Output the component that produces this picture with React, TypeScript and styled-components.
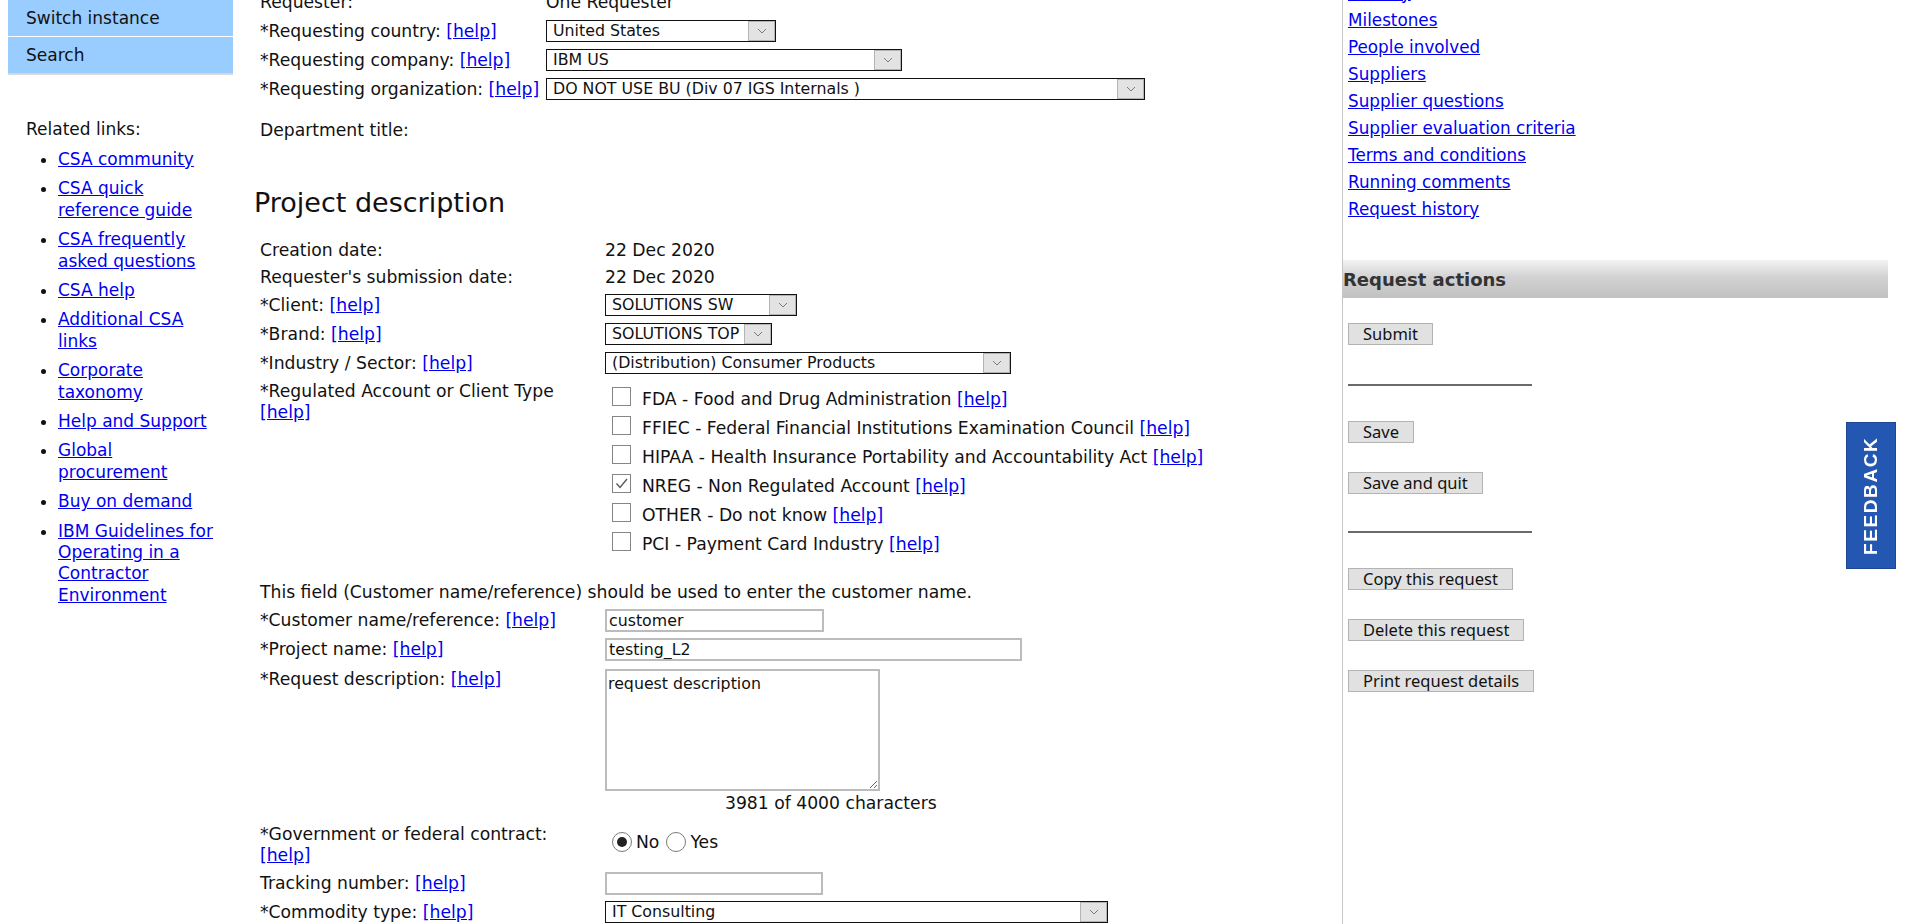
import React from 'react';
import styled, {createGlobalStyle} from 'styled-components';

const GlobalStyle = createGlobalStyle`
  html, body {
    margin: 0;
    padding: 0;
    background: #fff;
  }
  body {
    font-family: "DejaVu Sans", Verdana, sans-serif;
    font-size: 17.2px;
    color: #111;
    overflow: hidden;
  }
`

const Page = styled.div`
  display: flex;
  align-items: flex-start;
  width: 1920px;
  height: 924px;
  overflow: hidden;
`

/* ---------- left navigation ---------- */

const LeftNav = styled.nav`
  width: 225px;
  margin-left: 8px;
  flex-shrink: 0;
  font-size: 17px;
`

const NavButton = styled.a`
  display: flex;
  align-items: center;
  height: 36px;
  padding-left: 18px;
  background: #99ccff;
  color: #111;
  text-decoration: none;

  & + & {
    margin-top: 1px;
  }
`

const NavRule = styled.div`
  height: 2px;
  background: #d8d8d8;
`

const Related = styled.div`
  margin-top: 43.5px;
  padding: 0 9px 0 18px;
  line-height: 21.4px;
`

const LinkList = styled.ul`
  margin: 9px 0 0;
  padding-left: 32px;
  list-style: disc;
`

const LinkItem = styled.li`
  margin-bottom: 8px;
`

const TextLink = styled.a`
  color: #0000ee;
  text-decoration: underline;
`

/* ---------- main form ---------- */

const Main = styled.main`
  width: 1109px;
  flex-shrink: 0;
  box-sizing: border-box;
  padding-left: 22px;
  margin-top: -12.5px;
`

interface RowProps {
    $label: number,
    $h?: number,
    $pt?: number,
    $pb?: number,
    $mt?: number,
}

const FormRow = styled.div<RowProps>`
  display: grid;
  grid-template-columns: ${p => p.$label}px auto;
  align-items: ${p => p.$h ? 'center' : 'start'};
  height: ${p => p.$h ? `${p.$h}px` : 'auto'};
  padding: ${p => p.$pt || 0}px 0 ${p => p.$pb || 0}px;
  margin-top: ${p => p.$mt || 0}px;
  line-height: 21px;
`

const Label = styled.div`
  padding-left: 5px;
  white-space: nowrap;
`

const Value = styled.div`
  display: flex;
  flex-direction: column;
  align-items: flex-start;
`

const NoteRow = styled.div<{ $mt?: number }>`
  height: 27px;
  line-height: 27px;
  padding-left: 5px;
  margin-top: ${p => p.$mt || 0}px;
`

const SectionTitle = styled.h2`
  margin: 42.5px 0 18.5px -1px;
  font-size: 27px;
  font-weight: normal;
  line-height: 31px;
  color: #111;
`

const SelectBox = styled.div<{ $w: number }>`
  display: flex;
  width: ${p => p.$w}px;
  height: 22px;
  box-sizing: border-box;
  border: 1px solid #111;
  background: #fff;
  font-size: 15.8px;
  line-height: 20px;
`

const SelectText = styled.span`
  flex: 1;
  padding-left: 6px;
  white-space: nowrap;
  overflow: hidden;
`

const SelectArrow = styled.span`
  width: 27px;
  box-sizing: border-box;
  border: 1px solid #b4b4b4;
  background: #e3e3e3;
  display: flex;
  align-items: center;
  justify-content: center;
`

const TextInput = styled.input<{ $w: number }>`
  width: ${p => p.$w}px;
  height: 23px;
  box-sizing: border-box;
  margin: 0;
  padding: 0 2px;
  border: 2px solid #bcbcbc;
  font-family: "DejaVu Sans", Verdana, sans-serif;
  font-size: 15.8px;
  color: #111;
  outline: none;
`

const TextArea = styled.textarea`
  width: 275px;
  height: 122px;
  box-sizing: border-box;
  margin: 0;
  padding: 4px 1px;
  border: 2px solid #bcbcbc;
  font-family: "DejaVu Sans", Verdana, sans-serif;
  font-size: 15.8px;
  line-height: 18px;
  color: #111;
  resize: both;
  outline: none;
`

const Counter = styled.div`
  margin: 2px 0 0 120px;
  line-height: 21px;
`

const CheckList = styled.div`
  margin-top: 4px;
`

const CheckItem = styled.label`
  display: flex;
  align-items: center;
  height: 29px;
  white-space: nowrap;
`

const CheckBox = styled.span`
  width: 19px;
  height: 19px;
  box-sizing: border-box;
  flex-shrink: 0;
  margin: 0 11px 6px 7px;
  border: 1px solid #868686;
  background: #fff;
  display: flex;
  align-items: center;
  justify-content: center;
`

const RadioGroup = styled.div`
  display: flex;
  align-items: center;
  height: 21px;
  margin-top: 8px;
`

const Radio = styled.span<{ $on?: boolean, $gap: number }>`
  width: 20px;
  height: 20px;
  box-sizing: border-box;
  margin-left: ${p => p.$gap}px;
  margin-right: 4px;
  border: 1px solid #7a7a7a;
  border-radius: 50%;
  background: #fff;
  display: flex;
  align-items: center;
  justify-content: center;

  &::after {
    content: '';
    width: 10px;
    height: 10px;
    border-radius: 50%;
    background: ${p => p.$on ? '#222' : 'transparent'};
  }
`

/* ---------- right panel ---------- */

const SidePanel = styled.aside`
  flex: 1;
  min-height: 980px;
  margin-top: -20.5px;
  border-left: 1px solid #c6c6c6;
  font-size: 16.8px;
`

const SideLinks = styled.div`
  padding-left: 5px;
`

const SideLinkRow = styled.div`
  padding: 3px 0;
  line-height: 21px;
`

const ActionsBar = styled.div`
  width: 545px;
  height: 38px;
  margin-top: 37.5px;
  display: flex;
  align-items: center;
  background: linear-gradient(to bottom, #f3f3f3 0%, #d2d2d2 45%, #c1c1c1 100%);
  font-size: 18px;
  font-weight: bold;
  color: #333;
`

const ActionsBody = styled.div`
  display: flex;
  flex-direction: column;
  align-items: flex-start;
  padding-left: 5px;
`

const ActionButton = styled.button<{ $mt: number }>`
  margin: ${p => p.$mt}px 0 0;
  height: 22px;
  padding: 0 14px;
  font-family: "Noto Sans", "Open Sans", sans-serif;
  font-size: 16.5px;
  line-height: 20px;
  color: #111;
  background: #e1e1e1;
  border: 1px solid #b3b3b3;
  border-radius: 0;
`

const Divider = styled.div<{ $mt: number }>`
  width: 184px;
  margin-top: ${p => p.$mt}px;
  border-top: 2px solid #6a6a6a;
`

const FeedbackTab = styled.a`
  position: fixed;
  right: 24px;
  top: 422px;
  width: 50px;
  height: 147px;
  box-sizing: border-box;
  border: 1px solid #1d4795;
  background: #2457b1;
  color: #fff;
  display: flex;
  align-items: center;
  justify-content: center;
  writing-mode: vertical-rl;
  transform: rotate(180deg);
  font-family: "Liberation Sans", Arial, sans-serif;
  font-weight: bold;
  font-size: 19px;
  letter-spacing: 1.6px;
  text-decoration: none;
`

/* ---------- small pieces ---------- */

const Help = () => <TextLink href="#">[help]</TextLink>

const Chevron = () => (
    <svg width="10" height="6" viewBox="0 0 10 6">
        <polyline points="1,1 5,5 9,1" fill="none" stroke="#7b7b7b" strokeWidth="1"/>
    </svg>
)

const Select: React.FC<{ w: number, text: string }> = ({w, text}) => (
    <SelectBox $w={w}>
        <SelectText>{text}</SelectText>
        <SelectArrow><Chevron/></SelectArrow>
    </SelectBox>
)

const Check: React.FC<{ checked?: boolean, text: string }> = ({checked, text}) => (
    <CheckItem>
        <CheckBox>
            {checked &&
                <svg width="13" height="11" viewBox="0 0 13 11">
                    <polyline points="1.5,5.5 5,9.5 12,1" fill="none" stroke="#555" strokeWidth="1.3"/>
                </svg>}
        </CheckBox>
        <span>{text} <Help/></span>
    </CheckItem>
)

const relatedLinks = [
    'CSA community',
    'CSA quick reference guide',
    'CSA frequently asked questions',
    'CSA help',
    'Additional CSA links',
    'Corporate taxonomy',
    'Help and Support',
    'Global procurement',
    'Buy on demand',
    'IBM Guidelines for Operating in a Contractor Environment',
]

const sideLinks = [
    'Activity',
    'Milestones',
    'People involved',
    'Suppliers',
    'Supplier questions',
    'Supplier evaluation criteria',
    'Terms and conditions',
    'Running comments',
    'Request history',
]

const regulated = [
    {text: 'FDA - Food and Drug Administration'},
    {text: 'FFIEC - Federal Financial Institutions Examination Council'},
    {text: 'HIPAA - Health Insurance Portability and Accountability Act'},
    {text: 'NREG - Non Regulated Account', checked: true},
    {text: 'OTHER - Do not know'},
    {text: 'PCI - Payment Card Industry'},
]

const L1 = 291
const L2 = 350

export default function App() {
    return (
        <>
            <GlobalStyle/>
            <Page>
                <LeftNav>
                    <NavButton href="#">Switch instance</NavButton>
                    <NavButton href="#">Search</NavButton>
                    <NavRule/>
                    <Related>
                        <div>Related links:</div>
                        <LinkList>
                            {relatedLinks.map(l => (
                                <LinkItem key={l}><TextLink href="#">{l}</TextLink></LinkItem>
                            ))}
                        </LinkList>
                    </Related>
                </LeftNav>

                <Main>
                    <FormRow $label={L1} $h={29}>
                        <Label>Requester:</Label>
                        <Value>One Requester</Value>
                    </FormRow>
                    <FormRow $label={L1} $h={29}>
                        <Label>*Requesting country: <Help/></Label>
                        <Value><Select w={230} text="United States"/></Value>
                    </FormRow>
                    <FormRow $label={L1} $h={29}>
                        <Label>*Requesting company: <Help/></Label>
                        <Value><Select w={356} text="IBM US"/></Value>
                    </FormRow>
                    <FormRow $label={L1} $h={29}>
                        <Label>*Requesting organization: <Help/></Label>
                        <Value><Select w={599} text="DO NOT USE BU (Div 07 IGS Internals )"/></Value>
                    </FormRow>
                    <FormRow $label={L1} $h={29} $mt={12}>
                        <Label>Department title:</Label>
                        <Value/>
                    </FormRow>

                    <SectionTitle>Project description</SectionTitle>

                    <FormRow $label={L2} $h={27}>
                        <Label>Creation date:</Label>
                        <Value>22 Dec 2020</Value>
                    </FormRow>
                    <FormRow $label={L2} $h={27}>
                        <Label>Requester's submission date:</Label>
                        <Value>22 Dec 2020</Value>
                    </FormRow>
                    <FormRow $label={L2} $h={29}>
                        <Label>*Client: <Help/></Label>
                        <Value><Select w={192} text="SOLUTIONS SW"/></Value>
                    </FormRow>
                    <FormRow $label={L2} $h={29}>
                        <Label>*Brand: <Help/></Label>
                        <Value><Select w={167} text="SOLUTIONS TOP"/></Value>
                    </FormRow>
                    <FormRow $label={L2} $h={29}>
                        <Label>*Industry / Sector: <Help/></Label>
                        <Value><Select w={406} text="(Distribution) Consumer Products"/></Value>
                    </FormRow>
                    <FormRow $label={L2} $pt={3}>
                        <Label>*Regulated Account or Client Type<br/><Help/></Label>
                        <CheckList>
                            {regulated.map(r => <Check key={r.text} text={r.text} checked={r.checked}/>)}
                        </CheckList>
                    </FormRow>

                    <NoteRow $mt={20}>This field (Customer name/reference) should be used to enter the customer name.</NoteRow>

                    <FormRow $label={L2} $h={29}>
                        <Label>*Customer name/reference: <Help/></Label>
                        <Value><TextInput $w={219} defaultValue="customer"/></Value>
                    </FormRow>
                    <FormRow $label={L2} $h={29}>
                        <Label>*Project name: <Help/></Label>
                        <Value><TextInput $w={417} defaultValue="testing_L2"/></Value>
                    </FormRow>
                    <FormRow $label={L2} $pt={5} $pb={4}>
                        <Label>*Request description: <Help/></Label>
                        <Value>
                            <TextArea defaultValue="request description"/>
                            <Counter>3981 of 4000 characters</Counter>
                        </Value>
                    </FormRow>
                    <FormRow $label={L2} $pt={6} $pb={3}>
                        <Label>*Government or federal contract:<br/><Help/></Label>
                        <RadioGroup>
                            <Radio $on $gap={7}/>
                            <span>No</span>
                            <Radio $gap={7}/>
                            <span>Yes</span>
                        </RadioGroup>
                    </FormRow>
                    <FormRow $label={L2} $h={29}>
                        <Label>Tracking number: <Help/></Label>
                        <Value><TextInput $w={218}/></Value>
                    </FormRow>
                    <FormRow $label={L2} $h={29}>
                        <Label>*Commodity type: <Help/></Label>
                        <Value><Select w={503} text="IT Consulting"/></Value>
                    </FormRow>
                </Main>

                <SidePanel>
                    <SideLinks>
                        {sideLinks.map(l => (
                            <SideLinkRow key={l}><TextLink href="#">{l}</TextLink></SideLinkRow>
                        ))}
                    </SideLinks>
                    <ActionsBar>Request actions</ActionsBar>
                    <ActionsBody>
                        <ActionButton $mt={25}>Submit</ActionButton>
                        <Divider $mt={39}/>
                        <ActionButton $mt={35}>Save</ActionButton>
                        <ActionButton $mt={29}>Save and quit</ActionButton>
                        <Divider $mt={37}/>
                        <ActionButton $mt={35}>Copy this request</ActionButton>
                        <ActionButton $mt={29}>Delete this request</ActionButton>
                        <ActionButton $mt={29}>Print request details</ActionButton>
                    </ActionsBody>
                </SidePanel>
            </Page>
            <FeedbackTab href="#">FEEDBACK</FeedbackTab>
        </>
    );
}
